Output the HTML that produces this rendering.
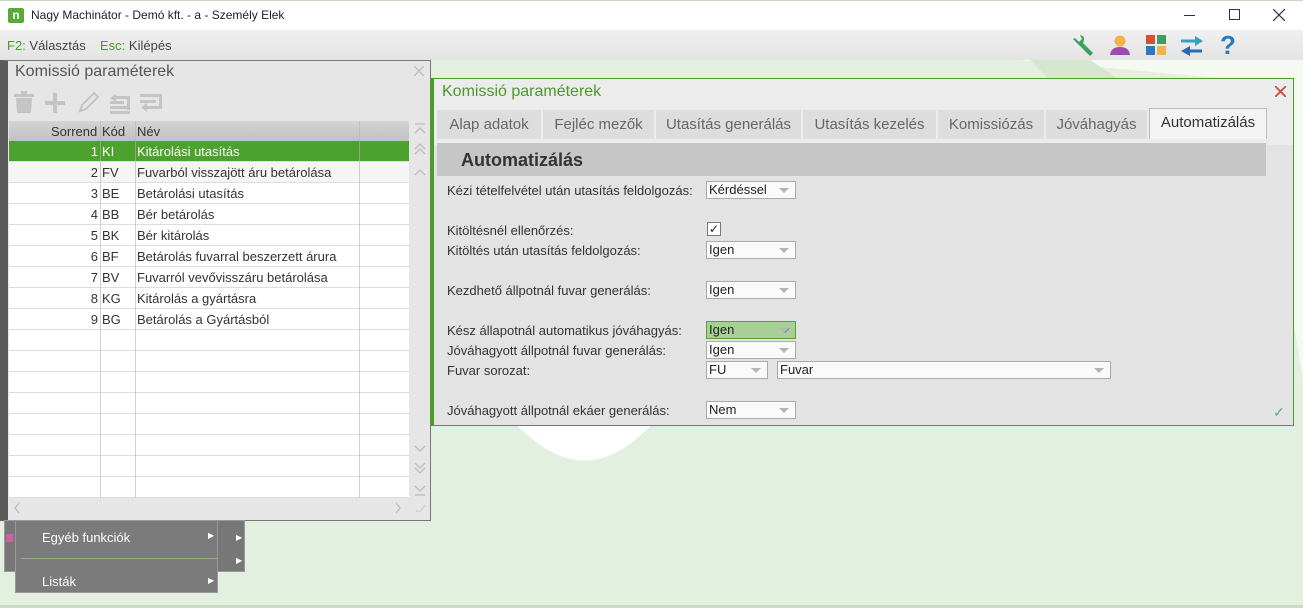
<!DOCTYPE html>
<html><head><meta charset="utf-8"><style>
*{box-sizing:border-box;margin:0;padding:0}
body{width:1303px;height:608px;overflow:hidden;position:relative;background:#e3efdf;font-family:"Liberation Sans",sans-serif;font-size:13px;color:#333}
.a{position:absolute}
.row{position:absolute;left:9px;width:400px;height:21px;border-bottom:1px solid #ddd;background:#fff;font-size:13px}
.row span{position:absolute;top:3px}
.sel{background:#4da22d;color:#fff}
.lbl{position:absolute;left:447px;font-size:13px;color:#333}
.dd{position:absolute;height:18px;background:#fafafa;border:1px solid #aaa;font-size:13px;padding-left:2px;line-height:16px;color:#222}
.dd:after{content:"";position:absolute;right:6px;top:6px;border:5px solid transparent;border-top:5px solid #b5b5b5;border-bottom:0}
.tab{position:absolute;top:110px;height:29px;background:#ddd;color:#666;font-size:15px;line-height:29px;text-align:center}
</style></head><body>
<svg class="a" style="left:0;top:0" width="1303" height="608">
<polygon points="1020,60 1303,60 1303,380 1280,240 1240,80" fill="#f4f9f2"/>
<polygon points="1030,60 1090,60 1120,80 1050,80" fill="#d5e8cf"/>
<path d="M518,426 Q585,495 650,426 Z" fill="#fff"/>
<rect x="0" y="605" width="1303" height="3" fill="#c8dcc2"/>
</svg>
<div class="a" style="left:0;top:0;width:1303px;height:30px;background:#fff;border-top:1px solid #c8d8c0"></div>
<div class="a" style="left:8px;top:8px;width:16px;height:15px;background:#5aaa3a;border-radius:2px;color:#fff;font-size:12px;font-weight:bold;line-height:14px;text-align:center">n</div>
<div class="a" style="left:31px;top:8px;font-size:12px;color:#222">Nagy Machinátor - Demó kft. - a - Személy Elek</div>
<div class="a" style="left:1184px;top:15px;width:11px;height:1px;background:#333"></div>
<div class="a" style="left:1229px;top:9px;width:11px;height:11px;border:1px solid #333"></div>
<svg class="a" style="left:1273px;top:9px" width="12" height="12"><path d="M0,0 L12,12 M12,0 L0,12" stroke="#333" stroke-width="1.2"/></svg>
<div class="a" style="left:0;top:30px;width:1303px;height:30px;background:linear-gradient(#f0f0f0,#e4e4e4)"></div>
<div class="a" style="left:7px;top:38px;font-size:13px;color:#444"><span style="color:#4a9a2a">F2:</span> Választás</div>
<div class="a" style="left:100px;top:38px;font-size:13px;color:#444"><span style="color:#4a9a2a">Esc:</span> Kilépés</div>
<svg class="a" style="left:1068px;top:32px" width="180" height="26">
<path d="M5,7 L12,14 L22,24 L25,21 L15,11 Q18,4 12,3 L14,7 L11,10 L7,6 Z" fill="#3aa05a"/>
<circle cx="52" cy="9" r="5.5" fill="#f0b44a"/><path d="M42,23 Q43,15 52,15 Q61,15 62,23 Z" fill="#9a4ab0"/>
<rect x="78" y="3" width="9" height="9" fill="#e04a3a"/><rect x="89" y="3" width="9" height="9" fill="#3aa060"/><rect x="78" y="14" width="9" height="9" fill="#2a7ac0"/><rect x="89" y="14" width="9" height="9" fill="#f0b44a"/>
<path d="M113,9 L128,9" stroke="#3aa0c0" stroke-width="3"/><path d="M127,4 L135,9 L127,14 Z" fill="#3aa0c0"/>
<path d="M121,19 L134,19" stroke="#2a6ab0" stroke-width="3"/><path d="M122,14 L113,19 L122,24 Z" fill="#2a6ab0"/>
</svg>
<div class="a" style="left:1220px;top:30px;font-size:26px;font-weight:bold;color:#2a7ac0">?</div>
<div class="a" style="left:0;top:60px;width:431px;height:461px;background:#e6e6e6;border:1px solid #777;border-left:8px solid #5a5a5a"></div>
<div class="a" style="left:15px;top:63px;font-size:16px;color:#555">Komissió paraméterek</div>
<svg class="a" style="left:414px;top:66px" width="10" height="10"><path d="M0,0 L10,10 M10,0 L0,10" stroke="#bbb" stroke-width="1.3"/></svg>
<svg class="a" style="left:12px;top:91px" width="160" height="24" fill="#c4c4c4">
<rect x="2" y="3" width="20" height="3"/><rect x="9" y="0" width="6" height="3"/><path d="M4,7 H20 L19,22 H5 Z"/>
<rect x="33" y="10" width="20" height="4"/><rect x="41" y="2" width="4" height="20"/>
<path d="M68,20 L70,14 L82,2 L86,6 L74,18 Z" fill="none" stroke="#c4c4c4" stroke-width="2"/>
<rect x="98" y="10" width="14" height="3"/><rect x="98" y="15" width="20" height="3"/><rect x="98" y="20" width="20" height="3"/><path d="M104,3 L98,7 L104,11 Z"/><rect x="104" y="5" width="14" height="3"/><rect x="115" y="5" width="3" height="14"/>
<rect x="128" y="3" width="22" height="3"/><rect x="128" y="9" width="16" height="3"/><rect x="147" y="3" width="3" height="14"/><rect x="135" y="15" width="15" height="3"/><path d="M135,12 L129,16.5 L135,21 Z"/>
</svg>
<div class="a" style="left:9px;top:121px;width:400px;height:20px;background:linear-gradient(#d4d4d4,#c2c2c2);font-size:13px;color:#333">
<span class="a" style="left:42px;top:3px">Sorrend</span><span class="a" style="left:93px;top:3px">Kód</span><span class="a" style="left:128px;top:3px">Név</span></div>
<div class="a" style="left:9px;top:141px;width:400px;height:357px;background:#fff"></div>
<div class="row sel" style="top:141px"><span style="right:311px">1</span><span style="left:93px">KI</span><span style="left:128px">Kitárolási utasítás</span></div>
<div class="row" style="top:162px;background:#f5f5f5"><span style="right:311px">2</span><span style="left:93px">FV</span><span style="left:128px">Fuvarból visszajött áru betárolása</span></div>
<div class="row" style="top:183px"><span style="right:311px">3</span><span style="left:93px">BE</span><span style="left:128px">Betárolási utasítás</span></div>
<div class="row" style="top:204px"><span style="right:311px">4</span><span style="left:93px">BB</span><span style="left:128px">Bér betárolás</span></div>
<div class="row" style="top:225px"><span style="right:311px">5</span><span style="left:93px">BK</span><span style="left:128px">Bér kitárolás</span></div>
<div class="row" style="top:246px"><span style="right:311px">6</span><span style="left:93px">BF</span><span style="left:128px">Betárolás fuvarral beszerzett árura</span></div>
<div class="row" style="top:267px"><span style="right:311px">7</span><span style="left:93px">BV</span><span style="left:128px">Fuvarról vevővisszáru betárolása</span></div>
<div class="row" style="top:288px"><span style="right:311px">8</span><span style="left:93px">KG</span><span style="left:128px">Kitárolás a gyártásra</span></div>
<div class="row" style="top:309px"><span style="right:311px">9</span><span style="left:93px">BG</span><span style="left:128px">Betárolás a Gyártásból</span></div>
<div class="row" style="top:330px"></div><div class="row" style="top:351px"></div><div class="row" style="top:372px"></div><div class="row" style="top:393px"></div><div class="row" style="top:414px"></div><div class="row" style="top:435px"></div><div class="row" style="top:456px"></div><div class="row" style="top:477px"></div>
<div class="a" style="left:100px;top:121px;width:1px;height:377px;background:rgba(180,180,180,.6)"></div>
<div class="a" style="left:135px;top:121px;width:1px;height:377px;background:rgba(180,180,180,.6)"></div>
<div class="a" style="left:359px;top:121px;width:1px;height:377px;background:rgba(180,180,180,.6)"></div>
<svg class="a" style="left:412px;top:122px" width="16" height="390" fill="none" stroke="#bbb" stroke-width="1.3">
<path d="M3,2 H13 M3,11 L8,6 L13,11"/>
<path d="M3,27 L8,22 L13,27 M3,32 L8,27 L13,32"/>
<path d="M3,53 L8,48 L13,53"/>
<path d="M3,324 L8,329 L13,324"/>
<path d="M3,341 L8,346 L13,341 M3,346 L8,351 L13,346"/>
<path d="M3,364 L8,369 L13,364 M3,373 H13"/>
<path d="M4,388 L7,391 L13,383" stroke="#ccc"/>
</svg>
<svg class="a" style="left:14px;top:502px" width="390" height="12" fill="none" stroke="#bbb" stroke-width="1.3"><path d="M5,1 L1,6 L5,11 M382,1 L386,6 L382,11"/></svg>
<div class="a" style="left:4px;top:520px;width:241px;height:52px;background:#777;border:1px solid #999"></div>
<div class="a" style="left:6px;top:534px;width:7px;height:8px;background:#d060a0"></div>
<div class="a" style="left:15px;top:520px;width:203px;height:73px;background:#7b7b7b;border:1px solid #999"></div>
<div class="a" style="left:21px;top:558px;width:196px;height:1px;background:#8ab878"></div>
<div class="a" style="left:42px;top:530px;color:#fff;font-size:13px">Egyéb funkciók</div>
<div class="a" style="left:42px;top:574px;color:#fff;font-size:13px">Listák</div>
<div class="a" style="left:208px;top:531px;color:#fff;font-size:8px">▶</div>
<div class="a" style="left:208px;top:576px;color:#fff;font-size:8px">▶</div>
<div class="a" style="left:236px;top:533px;color:#fff;font-size:8px">▶</div>
<div class="a" style="left:236px;top:556px;color:#fff;font-size:8px">▶</div>
<div class="a" style="left:430px;top:78px;width:864px;height:348px;background:#e3e3e3;border:1px solid #4a9a30;border-left:4px solid #4a9a30"></div>
<div class="a" style="left:434px;top:79px;width:859px;height:66px;background:#ececec"></div>
<div class="a" style="left:442px;top:83px;font-size:16px;color:#4a9a2a">Komissió paraméterek</div>
<svg class="a" style="left:1275px;top:86px" width="11" height="11"><path d="M0,0 L11,11 M11,0 L0,11" stroke="#d04a3a" stroke-width="1.8"/></svg>
<div class="tab" style="left:437px;width:104px">Alap adatok</div>
<div class="tab" style="left:543px;width:111px">Fejléc mezők</div>
<div class="tab" style="left:656px;width:145px">Utasítás generálás</div>
<div class="tab" style="left:803px;width:133px">Utasítás kezelés</div>
<div class="tab" style="left:938px;width:106px">Komissiózás</div>
<div class="tab" style="left:1046px;width:101px">Jóváhagyás</div>
<div class="tab" style="left:1149px;top:108px;width:118px;height:31px;background:#f4f4f4;border:1px solid #bbb;border-bottom:none;color:#333;line-height:28px">Automatizálás</div>
<div class="a" style="left:437px;top:143px;width:829px;height:33px;background:#c6c6c6"></div>
<div class="a" style="left:461px;top:150px;font-size:18px;font-weight:bold;color:#333">Automatizálás</div>
<div class="lbl" style="top:183px">Kézi tételfelvétel után utasítás feldolgozás:</div>
<div class="dd" style="left:706px;top:181px;width:90px">Kérdéssel</div>
<div class="lbl" style="top:223px">Kitöltésnél ellenőrzés:</div>
<div class="a" style="left:707px;top:222px;width:14px;height:14px;background:#fff;border:1px solid #777;font-size:12px;line-height:12px;text-align:center;color:#222">✓</div>
<div class="lbl" style="top:243px">Kitöltés után utasítás feldolgozás:</div>
<div class="dd" style="left:706px;top:241px;width:90px">Igen</div>
<div class="lbl" style="top:283px">Kezdhető állpotnál fuvar generálás:</div>
<div class="dd" style="left:706px;top:281px;width:90px">Igen</div>
<div class="lbl" style="top:323px">Kész állapotnál automatikus jóváhagyás:</div>
<div class="dd" style="left:706px;top:321px;width:90px;background:#a9cf98;border-color:#5aa03a">Igen<i style="position:absolute;right:5px;top:6px;border:5px solid transparent;border-top:5px solid #3a7ab8;border-bottom:0"></i></div>
<div class="lbl" style="top:343px">Jóváhagyott állpotnál fuvar generálás:</div>
<div class="dd" style="left:706px;top:341px;width:90px">Igen</div>
<div class="lbl" style="top:363px">Fuvar sorozat:</div>
<div class="dd" style="left:706px;top:361px;width:62px;padding-right:12px">FU</div>
<div class="dd" style="left:777px;top:361px;width:334px">Fuvar</div>
<div class="lbl" style="top:403px">Jóváhagyott állpotnál ekáer generálás:</div>
<div class="dd" style="left:706px;top:401px;width:90px">Nem</div>
<div class="a" style="left:1273px;top:404px;color:#5aaa7a;font-size:14px">✓</div>
</body></html>
